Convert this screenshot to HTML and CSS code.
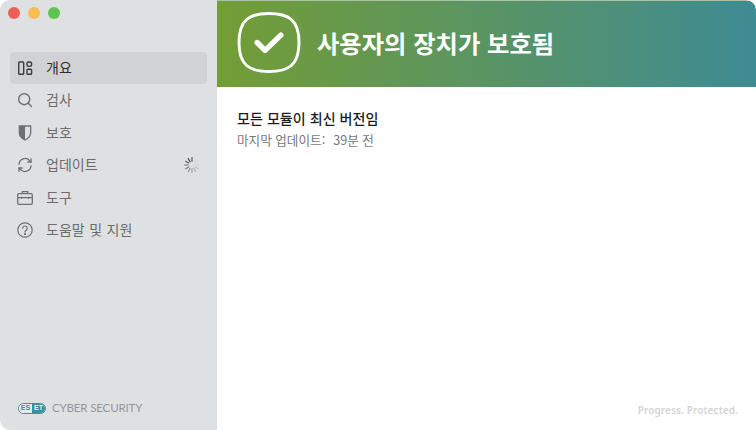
FILE: index.html
```html
<!DOCTYPE html>
<html lang="ko">
<head>
<meta charset="utf-8">
<title>ESET Cyber Security</title>
<link rel="stylesheet" href="styles.css">
</head>
<body>
<div class="window">
  <aside class="sidebar">
    <div class="traffic">
      <span class="light red"></span><span class="light yellow"></span><span class="light green"></span>
    </div>
    <nav class="nav">
      <div class="item active">
        <svg class="ico" viewBox="0 0 16 16" fill="none" stroke="#3a3b3d" stroke-width="1.4"><rect x="1.7" y="2" width="5" height="12.3" rx=".8"/><rect x="10" y="2" width="4.6" height="4.4" rx="1.8"/><rect x="10" y="9.2" width="4.6" height="5.1" rx=".8"/></svg>
        <span>개요</span>
      </div>
      <div class="item">
        <svg class="ico" viewBox="0 0 16 16" fill="none" stroke="#6e6f71" stroke-width="1.4"><circle cx="7.2" cy="7.2" r="5.5"/><path d="M11.2 11.2l3.3 3.3" stroke-linecap="round"/></svg>
        <span>검사</span>
      </div>
      <div class="item">
        <svg class="ico" viewBox="0 0 16 16"><path d="M8 1H2.3v6.500c0 3.600 2.400 6 5.700 7.500 3.300-1.500 5.700-3.900 5.700-7.500V1z" fill="none" stroke="#6e6f71" stroke-width="1.3" stroke-linejoin="round"/><path d="M8 1H2.3v6.500c0 3.600 2.400 6 5.700 7.500z" fill="#6e6f71"/></svg>
        <span>보호</span>
      </div>
      <div class="item">
        <svg class="ico" viewBox="0 0 16 16" fill="none" stroke="#6e6f71" stroke-width="1.3" stroke-linecap="round" stroke-linejoin="round"><path d="M2 7.200A6 6 0 0 1 12.600 3.600L14 5"/><path d="M14 1.800V5h-3.200"/><path d="M14 8.800A6 6 0 0 1 3.400 12.400L2 11"/><path d="M2 14.200V11h3.200"/></svg>
        <span class="grow">업데이트</span>
        <svg class="spin" viewBox="0 0 16 16" stroke-width="1.2" stroke-linecap="round" fill="none"><path d="M8 .6v3.600" stroke="#58595b"/><path d="M11.700 1.600L9.900 4.700" stroke="#d6d7d9"/><path d="M14.400 4.300L11.300 6.100" stroke="#d6d7d9"/><path d="M15.400 8h-3.600" stroke="#cfd0d2"/><path d="M14.400 11.700L11.300 9.900" stroke="#c0c1c3"/><path d="M11.700 14.400L9.900 11.300" stroke="#b0b1b3"/><path d="M8 15.400v-3.600" stroke="#a0a1a3"/><path d="M4.300 14.400L6.100 11.300" stroke="#909193"/><path d="M1.600 11.700L4.700 9.900" stroke="#808183"/><path d="M.6 8h3.600" stroke="#707173"/><path d="M1.600 4.300L4.700 6.100" stroke="#5c5d5f"/><path d="M4.300 1.600L6.100 4.700" stroke="#48494b"/></svg>
      </div>
      <div class="item">
        <svg class="ico" viewBox="0 0 16 16" fill="none" stroke="#6e6f71" stroke-width="1.3" stroke-linejoin="round"><rect x=".7" y="3.700" width="14.600" height="10.600" rx="1.3"/><path d="M5.200 3.700V1.700h5.600v2"/><path d="M.7 7.700h14.600"/><path d="M4.500 6.700v2M11.500 6.700v2"/></svg>
        <span>도구</span>
      </div>
      <div class="item">
        <svg class="ico" viewBox="0 0 16 16" fill="none" stroke="#6e6f71" stroke-width="1.2" stroke-linecap="round"><circle cx="8" cy="8" r="7.200"/><path d="M5.800 6.200a2.200 2.200 0 1 1 3.500 1.800C8.500 8.600 8 9 8 10"/><circle cx="8" cy="12" r=".5" fill="#6e6f71"/></svg>
        <span class="wide">도움말 및 지원</span>
      </div>
    </nav>
    <div class="brand">
      <span class="logo"><span class="logo-es">es</span><span class="logo-et">et</span></span>
      <span class="product">CYBER SECURITY</span>
    </div>
  </aside>
  <main class="main">
    <header class="banner">
      <svg class="shield" viewBox="0 0 64 62" fill="none"><path d="M32 1.500C12 1.500 1.500 8 1.500 31S12 60.500 32 60.500 62.500 54 62.500 31 52 1.500 32 1.500z" stroke="#fff" stroke-width="3"/><path d="M20 31l8 8 16-15.500" stroke="#fff" stroke-width="5.500" stroke-linecap="round" stroke-linejoin="round"/></svg>
      <h1 class="title">사용자의 장치가 보호됨</h1>
    </header>
    <section class="content">
      <h2 class="heading">모든 모듈이 최신 버전임</h2>
      <p class="sub"><span class="label">마지막 업데이트:</span><span>39분 전</span></p>
    </section>
    <footer class="tagline">Progress. Protected.</footer>
  </main>
</div>
</body>
</html>
```
FILE: styles.css
```css
* { box-sizing: border-box; }
html, body { margin: 0; padding: 0; background: #fff; }
.window {
  width: 756px; height: 430px; display: flex; overflow: hidden;
  border-radius: 10px; background: #fff;
  font-family: "Noto Sans CJK KR", "Noto Sans", sans-serif;
}
.sidebar {
  width: 217px; flex: none; display: flex; flex-direction: column;
  background: #dfe0e2; padding: 0 10px;
}
.traffic { display: flex; gap: 8px; padding-top: 7px; height: 52px; margin-left: -2px; }
.light { width: 12px; height: 12px; border-radius: 50%; }
.red { background: #ee5f58; }
.yellow { background: #f6bd4f; }
.green { background: #5ec44f; }
.nav { display: flex; flex-direction: column; gap: .4px; }
.item {
  height: 32px; display: flex; align-items: center; padding: 0 6px 2px 7px;
  border-radius: 4px; color: #6b6c6e; font-size: 14px; line-height: 20px;
}
.item.active { background: #d1d2d4; color: #2e2f31; }
.ico { width: 16px; height: 16px; flex: none; margin-right: 13px; position: relative; top: 1px; }
.grow { flex: 1; }
.wide { word-spacing: .6px; }
.spin { width: 16px; height: 16px; flex: none; margin-right: 1px; position: relative; top: 1px; }
.brand { margin-top: auto; height: 30px; display: flex; align-items: flex-start; padding: 0 0 0 8px; gap: 6px; }
.logo {
  width: 28px; height: 11px; margin-top: 3px; border-radius: 6px; border: 1.5px solid #3f8f9f;
  display: flex; align-items: stretch; overflow: hidden;
  font: 700 7px/8px "Liberation Sans", sans-serif; text-transform: uppercase; text-align: center;
}
.logo-es { flex: 1; color: #3f8f9f; background: #e6e8ea; }
.logo-et { flex: 1; color: #eef0f1; background: #3f8f9f; }
.product { font: 400 11.6px/16px Lato, sans-serif; color: #959698; letter-spacing: -.2px; }
.main { flex: 1; min-width: 0; display: flex; flex-direction: column; }
.banner {
  height: 87px; flex: none; display: flex; align-items: center; gap: 16px; padding: 0 0 3px 20px;
  background: linear-gradient(90deg, #739d35 0%, #3f8b93 100%);
  border-top: 1px solid #a9c3a3;
}
.shield { width: 64px; height: 61px; flex: none; }
.title { margin: 0; font-size: 24.3px; font-weight: 600; line-height: 30px; color: #fff; }
.content { flex: 1; padding: 21px 20px 0; }
.heading { margin: 0; font-size: 14.1px; font-weight: 500; line-height: 20px; color: #1d1d1f; }
.sub { margin: 3px 0 0; display: flex; gap: 8px; font-size: 12.6px; line-height: 18px; color: #77787a; }
.tagline { height: 27px; padding-right: 18px; text-align: right; font: 600 10px/14px "Noto Sans", sans-serif; color: #d3d4d6; letter-spacing: .1px; }
```
